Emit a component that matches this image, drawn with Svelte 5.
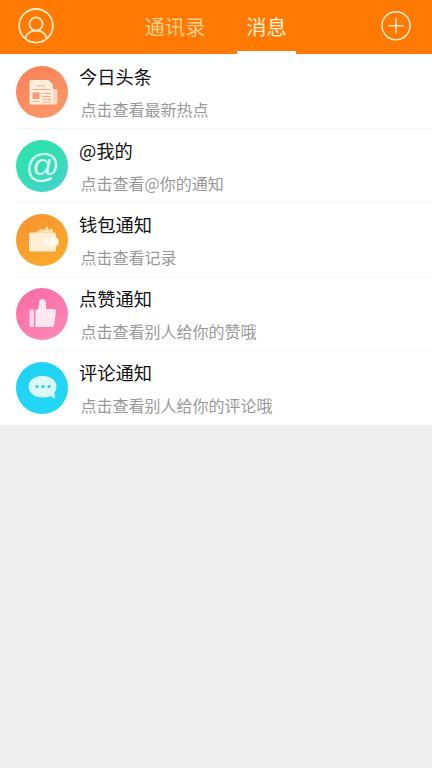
<script lang="ts">
	type Icon = 'news' | 'at' | 'wallet' | 'like' | 'comment';

	const tabs = ['通讯录', '消息'];
	let active = $state(1);

	const items: { icon: Icon; title: string; hint: string }[] = [
		{ icon: 'news', title: '今日头条', hint: '点击查看最新热点' },
		{ icon: 'at', title: '@我的', hint: '点击查看@你的通知' },
		{ icon: 'wallet', title: '钱包通知', hint: '点击查看记录' },
		{ icon: 'like', title: '点赞通知', hint: '点击查看别人给你的赞哦' },
		{ icon: 'comment', title: '评论通知', hint: '点击查看别人给你的评论哦' }
	];
</script>

<div class="page">
	<header>
		<button class="action" aria-label="profile">
			<svg width="36" height="36" viewBox="0 0 36 36" fill="none" stroke="#ffeccb" stroke-width="1.8">
				<circle cx="18" cy="17.8" r="16.8" />
				<circle cx="18" cy="16" r="6.6" />
				<path d="M7 30.2C8.6 25.6 12.6 22.6 18 22.6s9.4 3 11 7.6" />
			</svg>
		</button>
		<nav>
			{#each tabs as tab, i}
				<button class="tab" class:active={active === i} onclick={() => (active = i)}>
					<span>{tab}</span>
				</button>
			{/each}
		</nav>
		<button class="action" aria-label="add">
			<svg width="30" height="30" viewBox="0 0 30 30" fill="none" stroke="#ffeccb" stroke-width="1.5">
				<circle cx="15" cy="14.7" r="14" />
				<path d="M15 7.5v15M7.5 14.7h15" />
			</svg>
		</button>
	</header>

	<ul>
		{#each items as item}
			<li>
				<div class="icon {item.icon}">
					{#if item.icon === 'at'}
						<span>@</span>
					{:else}
						<svg width="52" height="52" viewBox="0 0 52 52">
							{#if item.icon === 'news'}
								<path d="M37 23h4.5v13a2.5 2.5 0 0 1-2.5 2.5h-2z" fill="#ffd5bb" />
								<path d="M15 14h17.5l4.5 4.500V38.500H15a1.500 1.500 0 0 1-1.500-1.500V15.500A1.500 1.500 0 0 1 15 14z" fill="#ffeddd" />
								<rect x="16.5" y="26.5" width="7" height="6.5" fill="#fb9a70" />
								<g fill="none" stroke="#fbab85" stroke-width="1">
									<path d="M21 21l2-1.200h4l2 1.200M16.500 23.500h18M26 27.500h9M26 30.500h9M26 33.500h9M16.500 35.500h7M26 36h9" />
								</g>
							{:else if item.icon === 'wallet'}
								<path d="M19.5 18.5l6-3.500 2 1.500 4-4.500 1.200 4 3.300-1.500 1.500 4z" fill="#ffe3ae" />
								<rect x="13" y="18.5" width="27" height="19" rx="2" fill="#ffeed3" />
								<path d="M31.5 23.5h8.500a2.500 2.500 0 0 1 2.500 2.500v3.500a2.500 2.500 0 0 1-2.500 2.500h-8.500a4 4 0 0 1 0-8.500z" fill="#fff9ed" />
							{:else if item.icon === 'like'}
								<rect x="13.5" y="21.5" width="4.5" height="17.5" rx="1" fill="#ffd8e7" />
								<path
									d="M19.5 22l2-.6c1.300-1.400 1.500-3.400 1.500-6.400 0-2.500 1.400-4 3.500-4s3.500 1.700 3.500 4.200V21h7.500c2 0 2.600 1.300 2.400 3l-1.700 12.500c-.2 1.700-1.200 2.500-2.700 2.500H19.500z"
									fill="#ffe8f1"
								/>
							{:else}
								<path
									d="M26.5 14c8 0 14 4.500 14 10.500 0 2.500-.8 4.700-2.300 6.500l1.300 6-5-2.700c-2.400.9-5 1.200-8 1.200-8 0-14-4.700-14-11S18.500 14 26.500 14z"
									fill="#daf8f8"
								/>
								<g fill="#3fc5da">
									<circle cx="21" cy="24.5" r="1.6" />
									<circle cx="27" cy="24.5" r="1.6" />
									<circle cx="33" cy="24.5" r="1.6" />
								</g>
							{/if}
						</svg>
					{/if}
				</div>
				<div class="text">
					<h2>{item.title}</h2>
					<p>{item.hint}</p>
				</div>
			</li>
		{/each}
	</ul>
</div>

<style>
	:global(body) {
		background: #eeeeee;
	}

	.page {
		min-height: 768px;
		background: #eeeeee;
		font-family: 'Noto Sans CJK SC', sans-serif;
	}

	header {
		display: flex;
		align-items: center;
		justify-content: space-between;
		height: 54px;
		padding: 0 21px 0 18px;
		box-sizing: border-box;
		background: #ff7903;
	}

	button {
		padding: 0;
		border: 0;
		background: none;
		font-family: inherit;
		cursor: pointer;
	}

	.action,
	.action svg {
		display: block;
	}

	.action {
		margin-top: -3px;
	}

	nav {
		display: flex;
		align-self: stretch;
		gap: 26px;
	}

	.tab {
		display: flex;
		justify-content: center;
		width: 72px;
		box-sizing: border-box;
		border-bottom: 3px solid transparent;
		font-size: 20.3px;
		line-height: 52px;
		color: #ffcf8c;
		white-space: nowrap;
	}

	.tab.active {
		width: 59px;
		border-color: #fff;
		color: #fff0d4;
	}

	ul {
		margin: 0;
		padding: 0 0 1px;
		list-style: none;
		background: #fff;
	}

	li {
		display: flex;
		align-items: center;
		gap: 12px;
		height: 74px;
		margin-left: 16px;
		padding-top: 2px;
		box-sizing: border-box;
	}

	li + li {
		padding-top: 1px;
		border-top: 1px solid #f6f6f6;
	}

	.icon {
		flex: none;
		width: 52px;
		height: 52px;
		border-radius: 50%;
	}

	.icon svg {
		display: block;
	}

	.news {
		background: linear-gradient(150deg, #f98059, #fb9a6b);
	}

	.at {
		background: linear-gradient(145deg, #31e0ae 35%, #46cfd3);
		color: #d5fbee;
		font: italic 34px/50px 'Liberation Sans', sans-serif;
		text-align: center;
	}

	.wallet {
		background: linear-gradient(150deg, #f79230, #faae2b);
	}

	.like {
		background: linear-gradient(150deg, #fb69a5, #fb8bb6);
	}

	.comment {
		background: linear-gradient(150deg, #20d0f5, #22d9f2);
	}

	.text {
		padding-top: 2px;
	}

	h2,
	p {
		margin: 0;
		font-weight: 400;
		white-space: nowrap;
	}

	h2 {
		margin-left: -1px;
		font-size: 18.3px;
		line-height: 32px;
		color: #111;
	}

	p {
		padding-left: 0.5px;
		font-size: 16px;
		line-height: 34px;
		color: #999;
	}
</style>
